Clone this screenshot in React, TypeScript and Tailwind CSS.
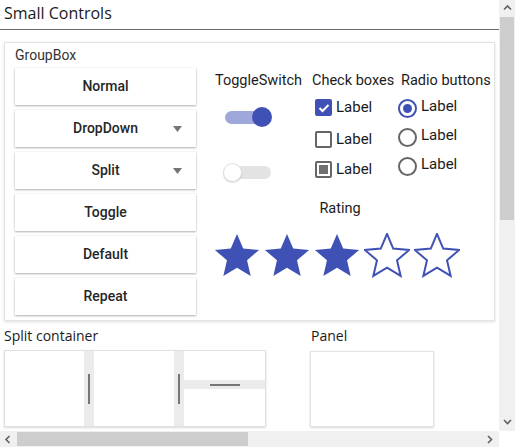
import type { ReactNode } from 'react'

const roboto = { fontFamily: 'Roboto, "Liberation Sans", sans-serif' }
const segoe = { fontFamily: '"Open Sans", "Noto Sans", sans-serif' }

const STAR = 'M12 17.27L18.18 21l-1.64-7.03L22 9.24l-7.19-.61L12 2 9.19 8.63 2 9.24l5.46 4.73L5.82 21z'

function Star({ filled }: { filled: boolean }) {
  return (
    <svg width="46" height="46" viewBox="1.6 1.6 20.8 20.8">
      <path
        d={STAR}
        fill={filled ? '#3f51b5' : 'none'}
        stroke="#3f51b5"
        strokeWidth={filled ? 0 : 0.9}
        strokeLinejoin="miter"
      />
    </svg>
  )
}

function Caret() {
  return (
    <svg width="9" height="6" viewBox="0 0 9 6" className="absolute right-[14px] top-[16px]">
      <path d="M0 0h9L4.5 6z" fill="#757575" />
    </svg>
  )
}

function Button({ label, caret }: { label: string; caret?: boolean }) {
  return (
    <div className="relative flex h-[37px] w-[181px] items-center justify-center bg-white text-[14px] font-medium text-[#262626] shadow-[0_1px_2px_rgba(0,0,0,0.3),0_0_1px_rgba(0,0,0,0.15)]">
      {label}
      {caret && <Caret />}
    </div>
  )
}

function Check({ kind }: { kind: 'on' | 'off' | 'mixed' }) {
  if (kind === 'on')
    return (
      <div className="flex h-[17px] w-[17px] items-center justify-center rounded-[2px] bg-[#3f51b5]">
        <svg width="12" height="10" viewBox="0 0 12 10">
          <path d="M1.5 5l3 3L10.5 2" fill="none" stroke="#fff" strokeWidth="2" />
        </svg>
      </div>
    )
  return (
    <div className="flex h-[17px] w-[17px] items-center justify-center rounded-[2px] border-2 border-[#666]">
      {kind === 'mixed' && <div className="h-[9px] w-[9px] bg-[#707070]" />}
    </div>
  )
}

function Radio({ on }: { on?: boolean }) {
  return (
    <div
      className={`flex h-[19px] w-[19px] items-center justify-center rounded-full border-2 ${on ? 'border-[#3f51b5]' : 'border-[#666]'}`}
    >
      {on && <div className="h-[9px] w-[9px] rounded-full bg-[#3f51b5]" />}
    </div>
  )
}

function Row({ children, className = '' }: { children: ReactNode; className?: string }) {
  return <div className={`flex items-center gap-[4px] text-[15px] text-[#1c1c1c] ${className}`}>{children}</div>
}

function Chevron({ dir }: { dir: 'up' | 'down' | 'left' | 'right' }) {
  const d = {
    up: 'M1 5.5L4.5 2 8 5.5',
    down: 'M1 2L4.5 5.5 8 2',
    left: 'M5.5 1L2 4.5 5.5 8',
    right: 'M2 1L5.5 4.5 2 8',
  }[dir]
  return (
    <svg width="9" height="9" viewBox="0 0 9 9">
      <path d={d} fill="none" stroke="#606060" strokeWidth="1.6" />
    </svg>
  )
}

export default function App() {
  return (
    <div className="h-[447px] w-[515px] overflow-hidden bg-white" style={roboto}>
      <div className="flex h-[431px]">
        <div className="w-[499px]">
          <div className="h-[30px] border-b border-[#6b6b6b] pl-[4px] pt-[1px] text-[16px] text-[#1a1a1a]" style={segoe}>
            Small Controls
          </div>

          <div className="ml-[4px] mt-[12px] h-[279px] w-[491px] border border-[#e3e3e3] bg-white pl-[10px] shadow-[0_1px_3px_rgba(0,0,0,0.12)]">
            <div className="pt-[4px] text-[14px] leading-[16px] text-[#333]">GroupBox</div>
            <div className="mt-[5px] flex">
              <div className="flex flex-col gap-[5px]">
                <Button label="Normal" />
                <Button label="DropDown" caret />
                <Button label="Split" caret />
                <Button label="Toggle" />
                <Button label="Default" />
                <Button label="Repeat" />
              </div>

              <div className="ml-[19px] flex flex-col">
                <div className="flex">
                  <div className="w-[97px]">
                    <div className="mt-[4px] text-[14.5px] leading-[18px] text-[#1c1c1c]">ToggleSwitch</div>
                    <div className="relative ml-[10px] mt-[21px] h-[13px] w-[46px] rounded-full bg-[#9fa8da]">
                      <div className="absolute right-[-1px] top-[-4px] h-[20px] w-[20px] rounded-full bg-[#3f51b5]" />
                    </div>
                    <div className="relative ml-[10px] mt-[42px] h-[13px] w-[46px] rounded-full bg-[#e3e3e3]">
                      <div className="absolute left-[-2px] top-[-3px] h-[19px] w-[19px] rounded-full border border-[#e0e0e0] bg-white shadow-[0_1px_1px_rgba(0,0,0,0.15)]" />
                    </div>
                  </div>
                  <div className="w-[89px]">
                    <div className="mt-[4px] text-[14.5px] leading-[18px] text-[#1c1c1c]">Check boxes</div>
                    <Row className="ml-[3px] mt-[9px] h-[17px]">
                      <Check kind="on" />
                      Label
                    </Row>
                    <Row className="ml-[3px] mt-[15px] h-[17px]">
                      <Check kind="off" />
                      Label
                    </Row>
                    <Row className="ml-[3px] mt-[13px] h-[17px]">
                      <Check kind="mixed" />
                      Label
                    </Row>
                  </div>
                  <div>
                    <div className="mt-[4px] text-[14.5px] leading-[18px] text-[#1c1c1c]">Radio buttons</div>
                    <Row className="ml-[-3px] mt-[9px] h-[19px] gap-[2px]">
                      <Radio on />
                      <span className="mt-[-4px]">Label</span>
                    </Row>
                    <Row className="ml-[-3px] mt-[10px] h-[19px] gap-[2px]">
                      <Radio />
                      <span className="mt-[-4px]">Label</span>
                    </Row>
                    <Row className="ml-[-3px] mt-[10px] h-[19px] gap-[2px]">
                      <Radio />
                      <span className="mt-[-4px]">Label</span>
                    </Row>
                  </div>
                </div>

                <div className="mt-[21px] w-[250px] text-center text-[14.5px] leading-[18px] text-[#1c1c1c]">Rating</div>
                <div className="ml-[-1px] mt-[15px] flex gap-[4px]">
                  <Star filled />
                  <Star filled />
                  <Star filled />
                  <Star filled={false} />
                  <Star filled={false} />
                </div>
              </div>
            </div>
          </div>

          <div className="mt-[6px] flex" style={segoe}>
            <div className="ml-[4px] w-[306px]">
              <div className="text-[14px] leading-[18px] text-[#1a1a1a]">Split container</div>
              <div className="mt-[5px] flex h-[77px] w-[262px] border border-[#e0e0e0] shadow-[0_1px_2px_rgba(0,0,0,0.15)]">
                <div className="w-[79px] bg-white" />
                <div className="flex w-[10px] items-center justify-center bg-[#ebebeb]">
                  <div className="h-[30px] w-[2px] bg-[#777]" />
                </div>
                <div className="w-[80px] bg-white" />
                <div className="flex w-[10px] items-center justify-center bg-[#ebebeb]">
                  <div className="h-[30px] w-[2px] bg-[#777]" />
                </div>
                <div className="flex flex-1 flex-col">
                  <div className="h-[29px] bg-white" />
                  <div className="flex h-[9px] items-center justify-center bg-[#ebebeb]">
                    <div className="h-[2px] w-[30px] bg-[#777]" />
                  </div>
                  <div className="flex-1 bg-white" />
                </div>
              </div>
            </div>
            <div>
              <div className="ml-[1px] text-[14px] leading-[18px] text-[#1a1a1a]">Panel</div>
              <div className="mt-[6px] h-[76px] w-[124px] border border-[#e3e3e3] bg-white shadow-[0_1px_2px_rgba(0,0,0,0.15)]" />
            </div>
          </div>
        </div>

        <div className="flex w-[16px] flex-col bg-[#f0f0f0]">
          <div className="flex h-[17px] items-center justify-center">
            <Chevron dir="up" />
          </div>
          <div className="mx-[1px] h-[203px] bg-[#cdcdcd]" />
          <div className="flex-1" />
          <div className="flex h-[17px] items-center justify-center">
            <Chevron dir="down" />
          </div>
        </div>
      </div>

      <div className="flex h-[16px]">
        <div className="flex w-[499px] items-center bg-[#f0f0f0]">
          <div className="flex w-[17px] justify-center">
            <Chevron dir="left" />
          </div>
          <div className="h-[14px] w-[231px] bg-[#cdcdcd]" />
          <div className="flex-1" />
          <div className="flex w-[17px] justify-center">
            <Chevron dir="right" />
          </div>
        </div>
        <div className="flex-1 bg-white" />
      </div>
    </div>
  )
}
